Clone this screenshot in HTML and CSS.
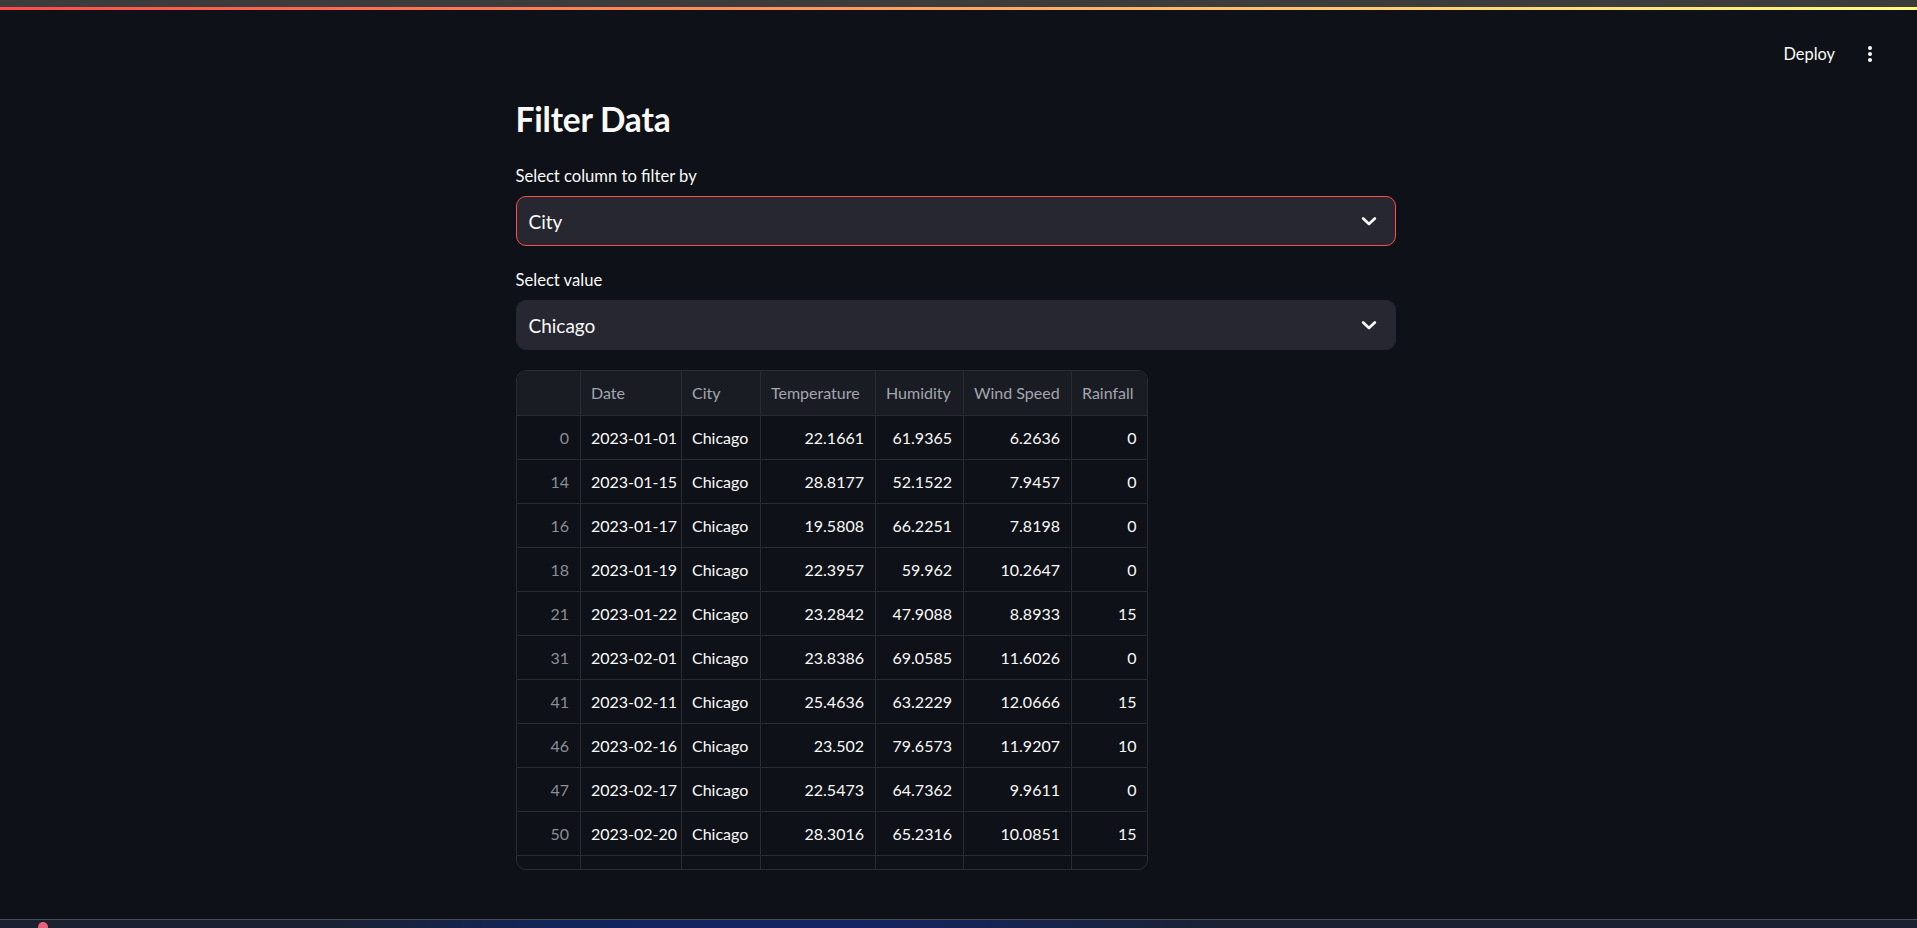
FILE: index.html
```html
<!DOCTYPE html>
<html lang="en">
<head>
<meta charset="utf-8">
<title>Filter Data</title>
<link rel="stylesheet" href="styles.css">
</head>
<body>
<div class="topbar"></div>
<div class="accent"></div>
<header class="app-header">
  <span class="deploy">Deploy</span>
  <span class="kebab" aria-label="menu"><i></i><i></i><i></i></span>
</header>
<main class="main">
  <h1 class="title">Filter Data</h1>
  <div class="field">
    <label class="label">Select column to filter by</label>
    <div class="select focused">
      <span class="value">City</span>
      <svg class="chev" viewBox="0 0 24 24" width="20" height="20"><path d="M5 9l7 6.5 7-6.5" fill="none" stroke="#fafafa" stroke-width="3.2" stroke-linecap="round" stroke-linejoin="round"/></svg>
    </div>
  </div>
  <div class="field">
    <label class="label">Select value</label>
    <div class="select">
      <span class="value">Chicago</span>
      <svg class="chev" viewBox="0 0 24 24" width="20" height="20"><path d="M5 9l7 6.5 7-6.5" fill="none" stroke="#fafafa" stroke-width="3.2" stroke-linecap="round" stroke-linejoin="round"/></svg>
    </div>
  </div>
  <div class="grid-wrap">
    <table class="grid">
      <colgroup>
        <col class="c-idx"><col class="c-date"><col class="c-city"><col class="c-temp"><col class="c-hum"><col class="c-wind"><col class="c-rain">
      </colgroup>
      <thead>
        <tr><th></th><th>Date</th><th>City</th><th>Temperature</th><th>Humidity</th><th>Wind Speed</th><th>Rainfall</th></tr>
      </thead>
      <tbody>
        <tr><td class="idx">0</td><td>2023-01-01</td><td>Chicago</td><td class="num">22.1661</td><td class="num">61.9365</td><td class="num">6.2636</td><td class="num">0</td></tr>
        <tr><td class="idx">14</td><td>2023-01-15</td><td>Chicago</td><td class="num">28.8177</td><td class="num">52.1522</td><td class="num">7.9457</td><td class="num">0</td></tr>
        <tr><td class="idx">16</td><td>2023-01-17</td><td>Chicago</td><td class="num">19.5808</td><td class="num">66.2251</td><td class="num">7.8198</td><td class="num">0</td></tr>
        <tr><td class="idx">18</td><td>2023-01-19</td><td>Chicago</td><td class="num">22.3957</td><td class="num">59.962</td><td class="num">10.2647</td><td class="num">0</td></tr>
        <tr><td class="idx">21</td><td>2023-01-22</td><td>Chicago</td><td class="num">23.2842</td><td class="num">47.9088</td><td class="num">8.8933</td><td class="num">15</td></tr>
        <tr><td class="idx">31</td><td>2023-02-01</td><td>Chicago</td><td class="num">23.8386</td><td class="num">69.0585</td><td class="num">11.6026</td><td class="num">0</td></tr>
        <tr><td class="idx">41</td><td>2023-02-11</td><td>Chicago</td><td class="num">25.4636</td><td class="num">63.2229</td><td class="num">12.0666</td><td class="num">15</td></tr>
        <tr><td class="idx">46</td><td>2023-02-16</td><td>Chicago</td><td class="num">23.502</td><td class="num">79.6573</td><td class="num">11.9207</td><td class="num">10</td></tr>
        <tr><td class="idx">47</td><td>2023-02-17</td><td>Chicago</td><td class="num">22.5473</td><td class="num">64.7362</td><td class="num">9.9611</td><td class="num">0</td></tr>
        <tr><td class="idx">50</td><td>2023-02-20</td><td>Chicago</td><td class="num">28.3016</td><td class="num">65.2316</td><td class="num">10.0851</td><td class="num">15</td></tr>
        <tr class="peek"><td class="idx"></td><td></td><td>Chicago</td><td class="num"></td><td class="num"></td><td class="num"></td><td class="num"></td></tr>
      </tbody>
    </table>
  </div>
</main>
<footer class="taskbar">
  <span class="app-dot"></span>
</footer>
</body>
</html>
```
FILE: styles.css
```css
* { box-sizing: border-box; }
html, body { margin: 0; padding: 0; }
body {
  background: #0e1117;
  color: #fafafa;
  font-family: Lato, "Noto Sans", sans-serif;
  height: 928px;
  display: flex;
  flex-direction: column;
  overflow: hidden;
}
.topbar { height: 7px; background: #3c3c3c; flex: none; }
.accent { height: 3px; background: linear-gradient(90deg, #ff4b4b, #fffd80); flex: none; }
.app-header {
  height: 86px;
  flex: none;
  display: flex;
  align-items: center;
  justify-content: flex-end;
  padding-right: 45px;
  gap: 33px;
}
.deploy { font-size: 16.4px; color: #fafafa; }
.kebab { display: flex; flex-direction: column; gap: 2px; padding-top: 1px; }
.kebab i { width: 4px; height: 4px; border-radius: 50%; background: #fafafa; display: block; }
.main {
  flex: 1;
  width: 880px;
  margin: 0 auto;
  position: relative;
  left: -3px;
  display: flex;
  flex-direction: column;
}
.title {
  margin: 2px 0 0;
  font-size: 33.5px;
  line-height: 42px;
  font-weight: 700;
  letter-spacing: -0.2px;
}
.field { display: flex; flex-direction: column; gap: 9px; margin-top: 25px; }
.field + .field { margin-top: 23px; }
.label { font-size: 16.6px; line-height: 22px; color: #fafafa; }
.select {
  height: 50px;
  background: #262730;
  border: 1px solid #262730;
  border-radius: 10px;
  display: flex;
  align-items: center;
  justify-content: space-between;
  padding: 0 16px 0 12px;
}
.select.focused { border-color: #ff4b4b; }
.value { font-size: 19px; }
.chev { display: block; }
.grid-wrap {
  margin-top: 20px;
  width: 632px;
  height: 500px;
  border: 1px solid #2a2c33;
  border-radius: 10px;
  overflow: hidden;
}
.grid {
  border-collapse: collapse;
  table-layout: fixed;
  width: 631px;
  font-size: 16px;
}
.c-idx { width: 64px; }
.c-date { width: 101px; }
.c-city { width: 79px; }
.c-temp { width: 115px; }
.c-hum { width: 88px; }
.c-wind { width: 108px; }
.c-rain { width: 76px; }
.grid th, .grid td {
  height: 44px;
  padding: 0 10px;
  border-right: 1px solid #2a2c33;
  border-bottom: 1px solid #2a2c33;
  white-space: nowrap;
  overflow: hidden;
  font-weight: 400;
}
.grid th:last-child, .grid td:last-child { border-right: none; }
.grid th {
  background: #1a1c24;
  color: #a3a6ae;
  text-align: left;
}
.grid td { color: #fafafa; }
.grid td.num, .grid td.idx { text-align: right; padding-right: 11px; }
.grid td.idx { color: #8b8e96; }
.taskbar {
  height: 9px;
  flex: none;
  border-top: 1px solid #4a4d56;
  background: linear-gradient(90deg, #1b2130 0%, #1b2130 16%, #12245c 30%, #142463 45%, #1b2130 65%, #1b2130 100%);
  position: relative;
}
.app-dot {
  position: absolute;
  left: 38px;
  top: 2px;
  width: 10px;
  height: 10px;
  border-radius: 50%;
  background: #e8607a;
}
```
